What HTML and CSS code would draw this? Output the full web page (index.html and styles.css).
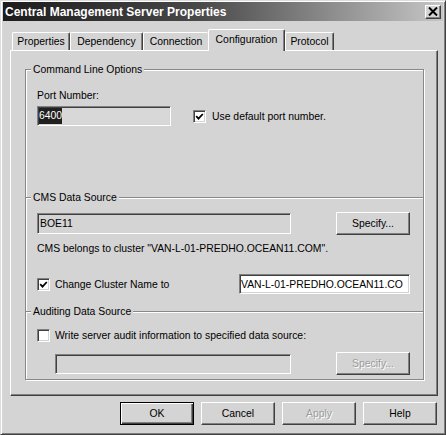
FILE: index.html
```html
<!DOCTYPE html>
<html>
<head>
<meta charset="utf-8">
<link rel="stylesheet" href="styles.css">
</head>
<body>
<div class="window">
  <div class="titlebar">
    <span class="title">Central Management Server Properties</span>
    <span class="close"><svg width="10" height="9" viewBox="0 0 10 9"><path d="M1 0.5 L9 8.5 M9 0.5 L1 8.5" stroke="#000" stroke-width="2"/></svg></span>
  </div>
  <div class="tabs">
    <div class="tab tab-prop">Properties</div>
    <div class="tab tab-dep">Dependency</div>
    <div class="tab tab-conn">Connection</div>
    <div class="tab tab-conf selected">Configuration</div>
    <div class="tab tab-proto">Protocol</div>
  </div>
  <div class="panel">
    <div class="groups">
      <div class="section s1">
        <div class="legend">Command Line Options</div>
        <div class="label port-label">Port Number:</div>
        <div class="row port-row">
          <div class="input port-input"><span class="sel">6400</span></div>
          <div class="check port-check"><svg width="9" height="9" viewBox="0 0 9 9"><path d="M1.2 4.2 L3.5 6.6 L7.8 2" fill="none" stroke="#000" stroke-width="1.8"/></svg></div>
          <span class="check-label">Use default port number.</span>
        </div>
      </div>
      <div class="section s2">
        <div class="legend">CMS Data Source</div>
        <div class="row ds-row">
          <div class="input boe-input">BOE11</div>
          <div class="btn btn-spec">Specify...</div>
        </div>
        <div class="label cluster-text">CMS belongs to cluster "VAN-L-01-PREDHO.OCEAN11.COM".</div>
        <div class="row change-row">
          <div class="check"><svg width="9" height="9" viewBox="0 0 9 9"><path d="M1.2 4.2 L3.5 6.6 L7.8 2" fill="none" stroke="#000" stroke-width="1.8"/></svg></div>
          <span class="check-label2">Change Cluster Name to</span>
          <div class="input van-input">VAN-L-01-PREDHO.OCEAN11.CO</div>
        </div>
      </div>
      <div class="section s3">
        <div class="legend">Auditing Data Source</div>
        <div class="row audit-row">
          <div class="check"></div>
          <span class="check-label2">Write server audit information to specified data source:</span>
        </div>
        <div class="row audit-in-row">
          <div class="input audit-input"></div>
          <div class="btn btn-spec disabled">Specify...</div>
        </div>
      </div>
    </div>
  </div>
  <div class="buttons">
    <div class="btn btn-default">OK</div>
    <div class="btn">Cancel</div>
    <div class="btn disabled">Apply</div>
    <div class="btn">Help</div>
  </div>
</div>
</body>
</html>
```
FILE: styles.css
```css
html, body {
  margin: 0;
  padding: 0;
  background: #d4d4d4;
}

.window {
  width: 446px;
  height: 435px;
  box-sizing: border-box;
  background: #d4d4d4;
  border: 1px solid;
  border-color: #dcdcdc #404040 #404040 #dcdcdc;
  box-shadow: inset 1px 1px #fff, inset -1px -1px #808080;
  font-family: "Liberation Sans", Arial, sans-serif;
  font-size: 10.4px;
  color: #000;
  overflow: hidden;
}

.titlebar {
  margin: 1px 2px 0;
  height: 19px;
  box-sizing: border-box;
  padding: 0 2px 0 2px;
  background: linear-gradient(to right, #1c1c1c 0%, #4a4a4a 45%, #c6c6c6 100%);
  display: flex;
  align-items: center;
  justify-content: space-between;
}

.title {
  color: #fff;
  font-weight: bold;
  font-size: 12px;
}

.close {
  width: 16px;
  height: 14px;
  box-sizing: border-box;
  background: #d4d4d4;
  border: 1px solid;
  border-color: #fff #404040 #404040 #fff;
  box-shadow: inset -1px -1px #808080;
  display: flex;
  align-items: center;
  justify-content: center;
}

.tabs {
  display: flex;
  align-items: flex-end;
  height: 29px;
  margin-left: 11px;
}

.tab {
  height: 18px;
  box-sizing: border-box;
  border-top: 1px solid #fff;
  border-left: 1px solid #fff;
  border-right: 1px solid #404040;
  box-shadow: inset -1px 0 #808080;
  border-radius: 2px 2px 0 0;
  display: flex;
  align-items: center;
  justify-content: center;
  white-space: nowrap;
}

.tab-prop { width: 58px; }
.tab-dep { width: 73px; }
.tab-conn { width: 65px; border-right: none; box-shadow: none; }
.tab-conf { width: 77px; }
.tab-proto { width: 49px; }

.tab.selected {
  height: 22px;
  margin-bottom: -1px;
  padding-bottom: 2px;
  background: #d4d4d4;
  position: relative;
  z-index: 1;
}

.panel {
  margin-left: 9px;
  width: 428px;
  height: 346px;
  box-sizing: border-box;
  border: 1px solid;
  border-color: #fff #404040 #404040 #fff;
  box-shadow: inset -1px -1px #808080;
  padding: 18px 0 0 14px;
}

.groups {
  width: 399px;
  height: 311px;
  box-sizing: border-box;
  border: 1px solid #888;
  box-shadow: inset 1px 1px #fff, 1px 1px #fff;
  display: flex;
  flex-direction: column;
}

.section {
  box-sizing: border-box;
  padding: 0 13px 0 11px;
  flex: none;
}

.s1 { height: 127px; }

.s2 {
  height: 114px;
  border-top: 1px solid #888;
  box-shadow: inset 0 1px #fff;
}

.s3 {
  height: 68px;
  border-top: 1px solid #888;
  box-shadow: inset 0 1px #fff;
}

.legend {
  display: table;
  margin: -7px 0 0 -6px;
  padding: 0 2px;
  height: 13px;
  line-height: 13px;
  background: #d4d4d4;
}

.label {
  height: 13px;
  line-height: 13px;
  white-space: nowrap;
}

.port-label { margin-top: 13px; }

.row {
  display: flex;
  align-items: center;
}

.port-row {
  margin-top: 4px;
  height: 20px;
}

.input {
  box-sizing: border-box;
  height: 20px;
  border: 1px solid;
  border-color: #808080 #fff #fff #808080;
  box-shadow: inset 1px 1px #404040, inset -1px -1px #d4d4d4;
  background: #d4d4d4;
  padding-left: 2px;
  display: flex;
  align-items: center;
  white-space: nowrap;
  overflow: hidden;
  flex: none;
}

.port-input {
  width: 134px;
  padding-left: 1px;
  background: #d8d8d8;
}

.sel {
  background: #202020;
  color: #fff;
  line-height: 14px;
  padding: 1px 0;
}

.check {
  width: 13px;
  height: 13px;
  box-sizing: border-box;
  border: 1px solid;
  border-color: #808080 #fff #fff #808080;
  box-shadow: inset 1px 1px #404040, inset -1px -1px #d4d4d4;
  background: #fff;
  flex: none;
  display: flex;
  align-items: center;
  justify-content: center;
}

.port-check { margin-left: 22px; }

.check-label { margin-left: 6px; white-space: nowrap; }
.check-label2 { margin-left: 5px; white-space: nowrap; }

.ds-row {
  margin-top: 8px;
  height: 23px;
}

.boe-input {
  width: 254px;
  height: 21px;
}

.btn {
  box-sizing: border-box;
  width: 74px;
  height: 23px;
  border: 1px solid;
  border-color: #fff #404040 #404040 #fff;
  box-shadow: inset -1px -1px #808080;
  background: #d4d4d4;
  display: flex;
  align-items: center;
  justify-content: center;
  flex: none;
}

.btn-spec { margin-left: auto; }

.btn.disabled {
  color: #9c9c9c;
  text-shadow: 1px 1px #fff;
}

.cluster-text { margin-top: 7px; }

.change-row {
  margin-top: 19px;
  height: 20px;
}

.van-input {
  margin-left: auto;
  width: 171px;
  background: #fff;
  padding-left: 1px;
}

.audit-row {
  margin-top: 11px;
  height: 13px;
}

.audit-in-row {
  margin-top: 10px;
  height: 23px;
}

.audit-input {
  margin-left: 18px;
  width: 236px;
}

.buttons {
  display: flex;
  justify-content: flex-end;
  gap: 7px;
  margin-top: 6px;
  padding-right: 8px;
}

.btn-default {
  border-color: #000;
  box-shadow: inset 1px 1px #fff, inset -1px -1px #404040, inset -2px -2px #808080;
}
```
